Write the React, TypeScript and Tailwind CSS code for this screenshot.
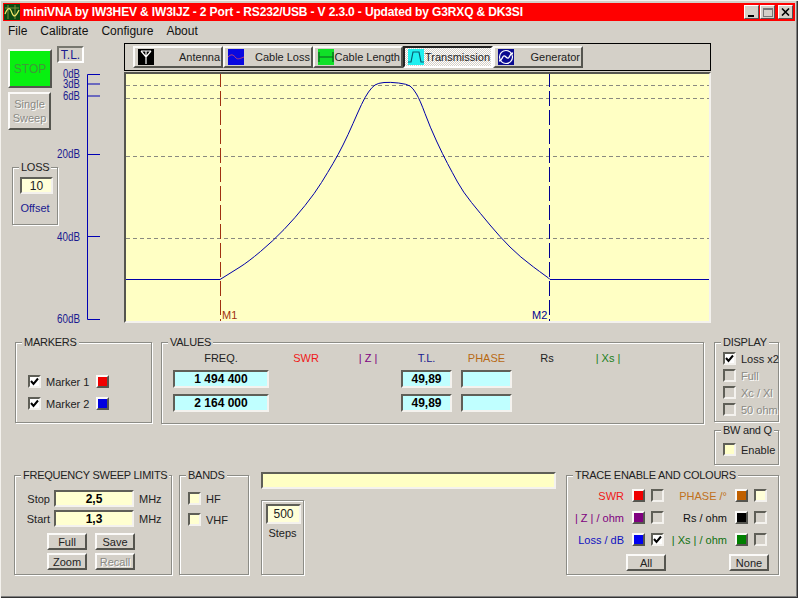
import type { ReactNode } from 'react';

const sunken = 'border-2 border-t-[#5f5f57] border-l-[#5f5f57] border-r-[#f4f2ee] border-b-[#f4f2ee]';
const raised = 'border-2 border-t-[#fbfaf8] border-l-[#fbfaf8] border-r-[#55554f] border-b-[#55554f]';
const disabledText = 'text-[#8a8a84] [text-shadow:1px_1px_0_#fff]';

const curve = [
  [220, 279], [232, 272], [248, 262], [273, 241], [295, 218], [315, 193], [328, 172], [338, 155], [348, 135],
  [358, 112], [365, 97], [372, 87], [378, 83], [390, 82], [407, 84], [413, 88], [420, 100], [430, 127],
  [443, 155], [452, 172], [463, 192], [480, 213], [500, 237], [520, 257], [547, 277], [550, 279],
];

// rounds the measured trace points so it doesn't look like a polyline
function smoothPath(points: number[][]) {
  let d = `M124 279.5 L${points[0][0]} 279.5`;
  for (let i = 1; i < points.length - 1; i++) {
    const midX = (points[i][0] + points[i + 1][0]) / 2;
    const midY = (points[i][1] + points[i + 1][1]) / 2;
    d += ` Q${points[i][0]} ${points[i][1]} ${midX} ${midY}`;
  }
  return `${d} L550 279.5 L710 279.5`;
}

function GroupBox({ title, className, children }: { title?: string; className: string; children: ReactNode }) {
  return (
    <fieldset className={`box-border min-w-0 shrink-0 border border-[#8c8c86] shadow-[1px_1px_0_#fff,inset_1px_1px_0_#fff] ${className}`}>
      {title && <legend className="ml-[6px] whitespace-nowrap bg-[#d4d0c8] px-[2px] leading-[14px] tracking-[-0.25px] text-[#222]">{title}</legend>}
      {children}
    </fieldset>
  );
}

function Check({ checked, fill, label, disabled }: { checked?: boolean; fill?: string; label?: string; disabled?: boolean }) {
  return (
    <div className="flex h-[13px] items-center gap-[5px]">
      <div className={`box-border flex h-[13px] w-[13px] shrink-0 items-center justify-center ${sunken} ${fill ?? ''}`}>
        {checked && (
          <svg width="9" height="9" viewBox="0 0 9 9">
            <path d="M1 4 L3.5 7 L8 1.5" fill="none" stroke="#000" strokeWidth="2" />
          </svg>
        )}
      </div>
      {label && <span className={`whitespace-nowrap ${disabled ? disabledText : 'text-[#222]'}`}>{label}</span>}
    </div>
  );
}

function Swatch({ color }: { color: string }) {
  return <div className={`box-border h-[13px] w-[13px] shrink-0 ${raised} ${color}`} />;
}

function Btn({ label, width, disabled }: { label: string; width: string; disabled?: boolean }) {
  return (
    <button className={`box-border flex h-[17px] items-center justify-center ${width} ${raised} ${disabled ? disabledText : 'text-[#222]'}`}>
      {label}
    </button>
  );
}

function ToolButton({ icon, label, active }: { icon: ReactNode; label: string; active?: boolean }) {
  return (
    <div
      className={`box-border flex h-[22px] w-[90px] items-center justify-between pl-[3px] pr-[1px] ${
        active
          ? 'border-2 border-t-[#222] border-l-[#222] border-r-white border-b-white bg-[repeating-conic-gradient(#fff_0_25%,#d4d0c8_0_50%)] bg-[length:2px_2px]'
          : raised
      }`}
    >
      {icon}
      <span className="whitespace-nowrap text-[#222]">{label}</span>
    </div>
  );
}

function Icon({ bg, children }: { bg: string; children: ReactNode }) {
  return (
    <svg width="16" height="16" viewBox="0 0 16 16" className={`shrink-0 ${bg}`}>
      {children}
    </svg>
  );
}

function TitleButton({ children, className }: { children: ReactNode; className?: string }) {
  return (
    <div className={`box-border flex h-[14px] w-[15px] items-center justify-center bg-[#d4d0c8] border border-t-white border-l-white border-r-[#555] border-b-[#555] ${className ?? ''}`}>
      {children}
    </div>
  );
}

function TraceRow({ label, color, swatch, width, fill, checked }: { label: string; color: string; swatch: string; width: string; fill?: string; checked?: boolean }) {
  return (
    <div className={`flex h-[13px] items-center ${width}`}>
      <span className={`flex-1 whitespace-nowrap text-right ${color}`}>{label}</span>
      <div className="ml-[8px]">
        <Swatch color={swatch} />
      </div>
      <div className="ml-[6px]">
        <Check checked={checked} fill={fill} />
      </div>
    </div>
  );
}

function ScaleLabel({ y, width, text }: { y: number; width: number; text: string }) {
  return (
    <text x="80" y={y} textLength={width} lengthAdjust="spacingAndGlyphs">
      {text}
    </text>
  );
}

export default function App() {
  return (
    <div className="box-border h-[598px] w-[798px] overflow-hidden bg-[#d4d0c8] p-[3px] text-[11px] leading-[14px] shadow-[inset_1px_1px_0_#f4f2ee,inset_-1px_-1px_0_#333,inset_-2px_-2px_0_#808080] [font-family:'Liberation_Sans',Arial,sans-serif]">
      {/* title bar */}
      <div className="flex h-[18px] items-center bg-[#ff0000] pl-[1px] pr-[2px]">
        <svg width="16" height="16" viewBox="0 0 16 16" className="shrink-0 bg-[#0c4a12]">
          <path d="M1 4 H15 M4 1 V15 M11 1 V15" stroke="#7d8f3a" strokeWidth="1" />
          <path d="M1 10 C4 3 6 3 8 9 C10 14 12 12 15 6" fill="none" stroke="#f2e86a" strokeWidth="1.3" />
        </svg>
        <span className="ml-[3px] flex-1 whitespace-nowrap text-[12px] font-bold tracking-[-0.14px] text-white">
          miniVNA by IW3HEV &amp; IW3IJZ - 2 Port - RS232/USB - V 2.3.0 - Updated by G3RXQ &amp; DK3SI
        </span>
        <TitleButton>
          <div className="mt-[7px] mr-[1px] h-[2px] w-[6px] bg-black" />
        </TitleButton>
        <TitleButton className="ml-[1px]">
          <div className="h-[9px] w-[10px] border border-t-2 border-[#777]" />
        </TitleButton>
        <TitleButton className="ml-[3px]">
          <svg width="9" height="8" viewBox="0 0 9 8">
            <path d="M1 0.5 L8 7.5 M8 0.5 L1 7.5" stroke="#000" strokeWidth="1.6" />
          </svg>
        </TitleButton>
      </div>

      {/* menu */}
      <div className="flex h-[20px] items-center gap-[13px] pl-[5px] text-[12px] text-[#111]">
        <span>File</span>
        <span>Calibrate</span>
        <span>Configure</span>
        <span>About</span>
      </div>

      {/* upper part */}
      <div className="flex h-[282px]">
        <div className="ml-[5px] w-[49px] shrink-0">
          <button className={`mt-[8px] box-border flex h-[39px] w-[44px] items-center justify-center bg-[#08f010] text-[12px] text-[#3f9a38] ${raised}`}>STOP</button>
          <button className={`mt-[4px] box-border flex h-[38px] w-[43px] flex-col items-center justify-center ${raised} ${disabledText}`}>
            <span>Single</span>
            <span>Sweep</span>
          </button>
          <GroupBox title="LOSS" className="ml-[4px] mt-[30px] h-[65px] w-[46px]">
            <div className={`mx-[7px] mt-[3px] box-border flex h-[17px] w-[33px] items-center justify-center bg-[#ffffd8] text-[12px] text-[#222] ${sunken}`}>10</div>
            <div className="mt-[7px] text-center text-[#1a1a90]">Offset</div>
          </GroupBox>
        </div>

        <div className="w-[67px] shrink-0">
          <div className="mt-[5px] box-border flex h-[17px] w-[27px] items-center justify-center border-2 border-t-[#77776f] border-l-[#77776f] border-r-white border-b-white text-[12px] text-[#1a1a90]">
            T.L.
          </div>
          <svg width="67" height="260" viewBox="57 63 67 260" className="block overflow-visible">
            <path d="M100 74.5 H87.5 V319.5 H100 M87.5 84 H100 M87.5 96 H100 M87.5 154.5 H100 M87.5 236.5 H100" fill="none" stroke="#0000b4" strokeWidth="1" />
            <g fill="#1a1a90" fontSize="12" textAnchor="end">
              <ScaleLabel y={78} width={17} text="0dB" />
              <ScaleLabel y={88} width={17} text="3dB" />
              <ScaleLabel y={100} width={17} text="6dB" />
              <ScaleLabel y={158} width={23} text="20dB" />
              <ScaleLabel y={241} width={23} text="40dB" />
              <ScaleLabel y={323} width={23} text="60dB" />
            </g>
          </svg>
        </div>

        <div className="w-[587px] shrink-0">
          <div className="mt-[2px] box-border flex h-[28px] border border-black pl-[8px] pt-[2px]">
            <ToolButton
              label="Antenna"
              icon={
                <Icon bg="bg-black">
                  <path d="M3 2 L8 8 L13 2 M3 2 H13 M8 2 V15" fill="none" stroke="#fff" strokeWidth="1.2" />
                </Icon>
              }
            />
            <ToolButton
              label="Cable Loss"
              icon={
                <Icon bg="bg-[#0808e0]">
                  <path d="M0 8 C3 5 5 5 8 9 C10 11 13 9 16 8" fill="none" stroke="#b04080" strokeWidth="1" />
                </Icon>
              }
            />
            <ToolButton
              label="Cable Length"
              icon={
                <Icon bg="bg-[#10e028]">
                  <path d="M1 3 V13 M15 3 V13 M1 8 H15" fill="none" stroke="#0a5a20" strokeWidth="1.2" />
                </Icon>
              }
            />
            <ToolButton
              active
              label="Transmission"
              icon={
                <Icon bg="bg-[#20f0f0]">
                  <path d="M0 13 H3 L5 3 H11 L13 13 H16" fill="none" stroke="#0a5a70" strokeWidth="1.2" />
                </Icon>
              }
            />
            <ToolButton
              label="Generator"
              icon={
                <Icon bg="bg-[#0a0a90]">
                  <circle cx="8" cy="8" r="6.5" fill="none" stroke="#fff" strokeWidth="1.2" />
                  <path d="M1 12 C5 12 4 4 8 8 C12 12 11 4 15 4" fill="none" stroke="#fff" strokeWidth="1.4" />
                </Icon>
              }
            />
          </div>
          <div className="mt-[1px] box-border h-[251px] border-2 border-t-[#55554f] border-l-[#55554f] border-r-[#f4f2ee] border-b-[#f4f2ee] bg-[#ffffc4]">
            <svg width="583" height="247" viewBox="126 74 583 247" className="block">
              <g stroke="#8a8a80" strokeWidth="1" strokeDasharray="4 3">
                <path d="M126 85.5 H710" />
                <path d="M126 98.5 H710" />
                <path d="M126 156.5 H710" />
                <path d="M126 238.5 H710" />
              </g>
              <path d="M220.5 72 V323" stroke="#a03010" strokeWidth="1" strokeDasharray="15 4" />
              <path d="M549.5 72 V323" stroke="#000090" strokeWidth="1" strokeDasharray="15 4" />
              <path d={smoothPath(curve)} fill="none" stroke="#0000a8" strokeWidth="1" />
              <text x="222" y="319" fontSize="11" fill="#a03010">M1</text>
              <text x="532" y="319" fontSize="11" fill="#000090">M2</text>
            </svg>
          </div>
        </div>
      </div>

      {/* markers, values, display */}
      <div className="mt-[12px] flex h-[133px] items-start">
        <GroupBox title="MARKERS" className="ml-[12px] h-[88px] w-[137px]">
          <div className="flex flex-col gap-[9px] pl-[12px] pt-[26px]">
            <div className="flex items-center">
              <div className="w-[68px]">
                <Check checked fill="bg-white" label="Marker 1" />
              </div>
              <Swatch color="bg-[#f00000]" />
            </div>
            <div className="flex items-center">
              <div className="w-[68px]">
                <Check checked fill="bg-white" label="Marker 2" />
              </div>
              <Swatch color="bg-[#0000e0]" />
            </div>
          </div>
        </GroupBox>

        <GroupBox title="VALUES" className="ml-[9px] h-[89px] w-[543px]">
          <div className="ml-[11px] mt-[3px] grid grid-cols-[96px_74px_50px_59px_60px_70px_52px] gap-y-[6px]">
            <div className="h-[12px] text-center leading-[12px] text-[#222]">FREQ.</div>
            <div className="h-[12px] text-center leading-[12px] text-[#f01818]">SWR</div>
            <div className="h-[12px] text-center leading-[12px] text-[#800080]">| Z |</div>
            <div className="h-[12px] pl-[8px] text-center leading-[12px] text-[#1a1a90]">T.L.</div>
            <div className="h-[12px] pl-[9px] text-center leading-[12px] text-[#b86a14]">PHASE</div>
            <div className="h-[12px] text-center leading-[12px] text-[#222]">Rs</div>
            <div className="h-[12px] text-center leading-[12px] text-[#208020]">| Xs |</div>
            {['1 494 400', '2 164 000'].map((freq) => (
              <div key={freq} className="col-span-7 grid grid-cols-[96px_74px_50px_59px_60px]">
                <div className={`box-border flex h-[18px] items-center justify-center bg-[#c0ffff] text-[12px] font-bold text-black ${sunken}`}>{freq}</div>
                <div />
                <div />
                <div className={`ml-[8px] box-border flex h-[18px] items-center justify-center bg-[#c0ffff] text-[12px] font-bold text-black ${sunken}`}>49,89</div>
                <div className={`ml-[9px] box-border h-[18px] bg-[#c0ffff] ${sunken}`} />
              </div>
            ))}
          </div>
        </GroupBox>

        <div className="ml-[10px] flex w-[65px] flex-col">
          <GroupBox title="DISPLAY" className="h-[87px] w-[65px]">
            <div className="flex flex-col gap-[4px] pl-[8px] pt-[3px]">
              <Check checked fill="bg-white" label="Loss x2" />
              <Check label="Full" disabled />
              <Check label="Xc / Xl" disabled />
              <Check label="50 ohm" disabled />
            </div>
          </GroupBox>
          <GroupBox title="BW and Q" className="mt-[1px] h-[42px] w-[65px]">
            <div className="pl-[8px] pt-[6px]">
              <Check fill="bg-[#ffffc8]" label="Enable" />
            </div>
          </GroupBox>
        </div>
      </div>

      {/* sweep limits, bands, steps, traces */}
      <div className="flex">
        <GroupBox title="FREQUENCY SWEEP LIMITS" className="ml-[11px] h-[107px] w-[158px]">
          <div className="flex flex-col gap-[3px] pt-[8px]">
            {[
              ['Stop', '2,5'],
              ['Start', '1,3'],
            ].map(([label, value]) => (
              <div key={label} className="flex h-[17px] items-center">
                <span className="w-[39px] pr-[4px] text-right text-[#222]">{label}</span>
                <div className={`box-border flex h-[17px] w-[80px] items-center justify-center bg-[#ffffd0] text-[12px] font-bold text-black ${sunken}`}>{value}</div>
                <span className="ml-[5px] text-[#222]">MHz</span>
              </div>
            ))}
          </div>
          <div className="ml-[32px] mt-[6px] grid w-[88px] grid-cols-[40px_40px] gap-x-[8px] gap-y-[3px]">
            <Btn label="Full" width="w-[40px]" />
            <Btn label="Save" width="w-[40px]" />
            <Btn label="Zoom" width="w-[40px]" />
            <Btn label="Recall" width="w-[40px]" disabled />
          </div>
        </GroupBox>

        <GroupBox title="BANDS" className="ml-[7px] h-[107px] w-[70px]">
          <div className="flex flex-col gap-[8px] pl-[8px] pt-[10px]">
            <Check fill="bg-[#ffffd0]" label="HF" />
            <Check fill="bg-[#ffffd0]" label="VHF" />
          </div>
        </GroupBox>

        <div className="ml-[12px] w-[295px] shrink-0 pt-[4px]">
          <div className={`box-border h-[17px] w-[295px] bg-[#ffffc4] ${sunken}`} />
          <div className="mt-[11px] box-border h-[75px] w-[43px] border border-[#8c8c86] shadow-[1px_1px_0_#fff,inset_1px_1px_0_#fff]">
            <div className={`ml-[4px] mt-[3px] box-border flex h-[20px] w-[35px] items-center justify-center bg-[#ffffd8] text-[12px] text-[#222] ${sunken}`}>500</div>
            <div className="mt-[2px] text-center text-[#222]">Steps</div>
          </div>
        </div>

        <GroupBox title="TRACE ENABLE AND COLOURS" className="ml-[10px] h-[107px] w-[213px]">
          <div className="flex pt-[7px]">
            <div className="flex flex-col gap-[9px]">
              <TraceRow width="w-[97px]" label="SWR" color="text-[#f01818]" swatch="bg-[#f00000]" />
              <TraceRow width="w-[97px]" label="| Z | / ohm" color="text-[#800080]" swatch="bg-[#800080]" />
              <TraceRow width="w-[97px]" label="Loss / dB" color="text-[#1010c0]" swatch="bg-[#0000f0]" checked fill="bg-white" />
            </div>
            <div className="flex flex-col gap-[9px]">
              <TraceRow width="w-[103px]" label="PHASE /°" color="text-[#c07020]" swatch="bg-[#c06000]" fill="bg-[#ffffd8]" />
              <TraceRow width="w-[103px]" label="Rs / ohm" color="text-[#111]" swatch="bg-black" />
              <TraceRow width="w-[103px]" label="| Xs | / ohm" color="text-[#107010]" swatch="bg-[#008000]" />
            </div>
          </div>
          <div className="ml-[59px] mt-[8px] flex gap-[63px]">
            <Btn label="All" width="w-[40px]" />
            <Btn label="None" width="w-[40px]" />
          </div>
        </GroupBox>
      </div>
    </div>
  );
}
